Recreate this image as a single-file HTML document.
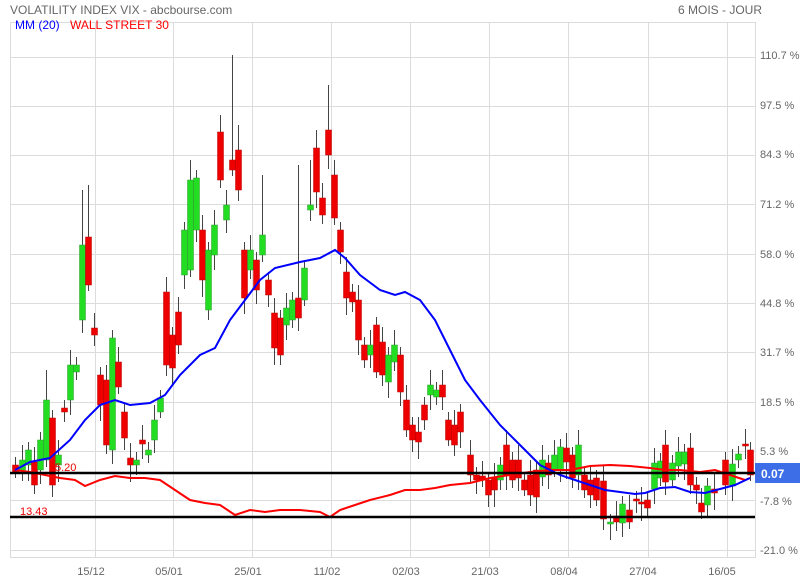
<!DOCTYPE html>
<html><head><meta charset="utf-8"><style>
html,body{margin:0;padding:0;background:#fff;width:800px;height:580px;overflow:hidden}
svg{display:block;font-family:"Liberation Sans",sans-serif}
</style></head><body>
<svg id="s" width="800" height="580" xmlns="http://www.w3.org/2000/svg">
<rect width="800" height="580" fill="#fff"/>
<g stroke="#dcdcdc" stroke-width="1" fill="none">
<rect x="10.5" y="22.5" width="745" height="535"/>
<path d="M95.5 22V558M173.5 22V558M252.5 22V558M331.5 22V558M410.5 22V558M489.5 22V558M568.5 22V558M648.5 22V558M727.5 22V558"/>
<path d="M10 57.5H755M10 106.5H755M10 155.5H755M10 204.5H755M10 254.5H755M10 303.5H755M10 352.5H755M10 402.5H755M10 451.5H755M10 500.5H755M10 550.5H755"/>
</g>
<g id="c"></g>
<polyline fill="none" stroke="#f00" stroke-width="2" points="15,470 30,472 45,475 60,478 75,480 85,486 100,480 115,476 130,478 145,478 160,480 175,490 190,500 205,503 220,505 235,515 250,510 265,512 280,510 300,510 320,512 330,517 340,510 355,505 370,500 390,495 405,490 420,490 435,488 450,485 470,483 490,478 510,475 530,472 550,470 570,470 590,466 610,465 630,466 650,468 665,470 680,470 700,472 715,470 730,475 745,480 750,478"/>
<polyline fill="none" stroke="#00f" stroke-width="2" points="15,470 30,462 50,458 70,440 85,420 100,405 115,400 130,405 150,403 165,395 180,375 200,355 215,348 230,320 245,300 260,280 275,268 300,262 320,258 335,250 345,258 360,275 380,290 395,295 405,292 420,300 435,320 450,350 465,380 480,400 500,425 520,445 540,465 560,475 575,480 590,485 605,490 620,492 635,494 645,493 660,488 675,487 690,492 705,493 720,489 735,485 750,478"/>
<path d="M10 473H755M10 517H755" stroke="#000" stroke-width="2.5"/>
<text x="55" y="471" fill="#e00" font-size="11">5.20</text>
<text x="20" y="515" fill="#e00" font-size="11">13.43</text>
<rect x="755" y="463" width="45" height="20" fill="#3d6ee8"/>
<text x="761" y="478" fill="#fff" font-size="12" font-weight="bold">0.07</text>
<g fill="#666" font-size="11">
<text x="10" y="14" font-size="12">VOLATILITY INDEX VIX - abcbourse.com</text>
<text x="678" y="14" font-size="12">6 MOIS - JOUR</text>
<text x="760" y="59">110.7 %</text><text x="760" y="109">97.5 %</text><text x="760" y="158">84.3 %</text><text x="760" y="208">71.2 %</text><text x="760" y="258">58.0 %</text><text x="760" y="307">44.8 %</text><text x="760" y="356">31.7 %</text><text x="760" y="406">18.5 %</text><text x="760" y="455">5.3 %</text><text x="760" y="505">-7.8 %</text><text x="760" y="554">-21.0 %</text>
<g text-anchor="middle"><text x="91" y="575">15/12</text><text x="169" y="575">05/01</text><text x="248" y="575">25/01</text><text x="327" y="575">11/02</text><text x="406" y="575">02/03</text><text x="485" y="575">21/03</text><text x="564" y="575">08/04</text><text x="643" y="575">27/04</text><text x="722" y="575">16/05</text></g>
</g>
<text x="15" y="29" fill="#00f" font-size="12">MM (20)</text>
<text x="70" y="29" fill="#f00" font-size="12">WALL STREET 30</text>
</svg>
<script>
var d=[[15,'r',465,472],[22,'g',460,470],[28,'g',450,465],[34,'r',462,485],[40,'g',440,470],[46,'g',400,460],[52,'r',418,485],[58,'g',455,465],[64,'r',408,412],[70,'g',365,400],[76,'g',365,372],[82,'g',245,320],[88,'r',237,285],[94,'r',328,335],[100,'r',375,405],[106,'r',380,445],[112,'g',338,450],[118,'r',362,387],[124,'r',412,438],[130,'r',458,465],[136,'g',460,465],[142,'r',440,444],[148,'g',450,455],[154,'g',420,440],[160,'g',398,412],[166,'r',292,365],[172,'r',335,368],[178,'r',312,345],[184,'g',230,275],[190,'g',180,270],[196,'g',178,230],[202,'r',230,280],[208,'g',250,310],[214,'g',225,255],[220,'r',132,180],[226,'g',205,220],[232,'r',160,170],[238,'r',150,190],[244,'r',250,298],[250,'g',250,270],[256,'r',260,290],[262,'g',235,255],[268,'r',280,295],[274,'r',313,348],[280,'r',318,355],[286,'g',308,325],[292,'g',300,320],[298,'r',298,318],[304,'g',268,300],[310,'g',205,210],[316,'r',148,192],[322,'r',198,215],[328,'r',130,155],[334,'r',175,218],[340,'r',230,252],[346,'r',272,298],[352,'r',292,302],[358,'r',300,340],[364,'r',345,360],[370,'g',345,355],[376,'r',325,372],[382,'r',342,375],[388,'g',355,382],[394,'g',345,362],[400,'r',355,392],[406,'r',400,430],[412,'r',425,440],[418,'r',432,442],[424,'r',405,420],[430,'g',385,395],[436,'g',390,397],[442,'r',385,397],[448,'r',420,440],[454,'r',425,445],[460,'r',412,432],[470,'r',455,475],[476,'r',475,480],[482,'r',476,480],[488,'r',480,495],[494,'r',478,490],[500,'g',465,480],[506,'r',445,475],[512,'r',460,480],[518,'r',460,478],[524,'r',480,490],[530,'r',475,495],[536,'r',470,497],[542,'g',460,477],[548,'r',463,475],[554,'g',455,470],[560,'g',447,470],[566,'r',448,462],[572,'r',455,478],[578,'g',445,475],[584,'r',475,490],[590,'r',480,495],[596,'r',478,500],[603,'r',481,519],[610,'g',522,524],[616,'r',516,522],[622,'g',504,523],[629,'r',510,522],[636,'r',499,501],[641,'r',502,504],[647,'r',500,508],[654,'g',463,489],[660,'g',461,478],[665,'r',445,482],[672,'g',463,480],[678,'g',452,466],[684,'g',452,464],[690,'r',448,485],[696,'r',485,490],[701,'r',503,512],[707,'g',486,505],[714,'r',489,493],[725,'r',460,485],[732,'g',464,486],[738,'g',454,460],[745,'r',444,446],[750,'r',450,475]];
var big={82:190,88:185,190:160,220:115,232:55,238:125,328:85,310:160,316:130,298:165,262:175,46:370};
var h='';d.forEach(function(c,i){var x=c[0],t=c[2],b=c[3];var wt=big[x]||t-8-(i*7%14),wb=b+6+(i*5%12);
h+='<line x1="'+(x+.5)+'" x2="'+(x+.5)+'" y1="'+wt+'" y2="'+wb+'" stroke="#444" stroke-width="1"/>';
h+='<rect x="'+(x-2.5)+'" y="'+t+'" width="6" height="'+Math.max(2,b-t)+'" fill="'+(c[1]=='r'?'#e00':'#2d2')+'" stroke="'+(c[1]=='r'?'#b00':'#393')+'" stroke-width=".5"/>';});
document.getElementById('c').innerHTML=h;
</script>
</body></html>
